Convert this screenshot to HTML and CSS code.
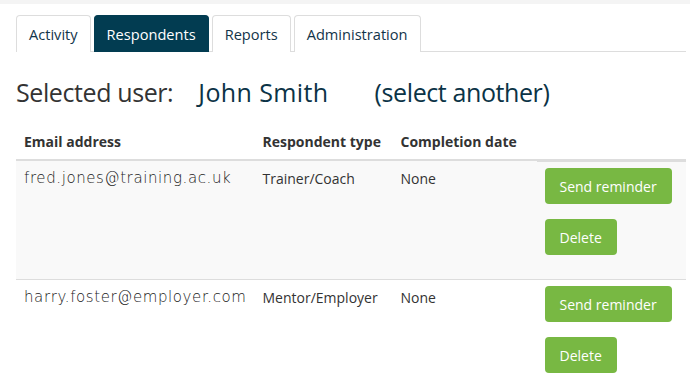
FILE: index.html
```html
<!DOCTYPE html>
<html>
<head>
<meta charset="utf-8">
<link rel="stylesheet" href="styles.css">
</head>
<body>
<div class="topstrip"></div>
<div class="page">
  <ul class="tabs">
    <li class="tab">Activity</li>
    <li class="tab active">Respondents</li>
    <li class="tab">Reports</li>
    <li class="tab">Administration</li>
  </ul>
  <h1 class="title"><span class="label">Selected user:</span><span class="user">John Smith</span><span class="other">(select another)</span></h1>
  <table class="resp">
    <thead>
      <tr><th class="c-email">Email address</th><th class="c-type">Respondent type</th><th class="c-date">Completion date</th><th class="c-act"></th></tr>
    </thead>
    <tbody>
      <tr class="odd">
        <td class="email">fred.jones@training.ac.uk</td>
        <td>Trainer/Coach</td>
        <td>None</td>
        <td class="acts"><button class="btn">Send reminder</button><button class="btn">Delete</button></td>
      </tr>
      <tr>
        <td class="email">harry.foster@employer.com</td>
        <td>Mentor/Employer</td>
        <td>None</td>
        <td class="acts"><button class="btn">Send reminder</button><button class="btn">Delete</button></td>
      </tr>
    </tbody>
  </table>
</div>
</body>
</html>
```
FILE: styles.css
```css
* { box-sizing: border-box; }
html, body { margin: 0; padding: 0; background: #fff; }
body { font-family: "Open Sans", sans-serif; font-size: 14px; color: #333; }
.topstrip { height: 4px; background: #f4f4f4; }
.page { padding: 11px 4px 0 16px; }
.tabs {
  list-style: none; margin: 0; padding: 0;
  display: flex; gap: 3px;
  border-bottom: 1px solid #ddd;
}
.tab {
  height: 37px; line-height: 36px; padding: 0 12px;
  border: 1px solid #ddd; border-bottom: none;
  border-radius: 4px 4px 0 0; font-size: 14.6px;
  color: #12344a; margin-bottom: -1px; background: #fff;
}
.tab.active { background: #023c51; border-color: #023c51; color: #fff; }
.title {
  font-weight: 400; font-size: 25px; margin: 23px 0 0 0; line-height: 34px;
  display: flex; color: #333; letter-spacing: -0.4px;
}
.title .user { color: #0b3346; margin-left: 25px; letter-spacing: 0.4px; }
.title .other { color: #0b3346; margin-left: 46px; }
.resp { border-collapse: collapse; width: 670px; margin-top: 15px; }
.resp th {
  text-align: left; font-weight: 700; padding: 8px 8px; height: 34px;
  border-bottom: 2px solid #ddd; vertical-align: bottom;
}
.resp td { padding: 8px; vertical-align: top; border-top: 1px solid #ddd; }
.resp tr.odd td { background: #f9f9f9; }
.c-email { width: 238px; }
.c-type { width: 138px; }
.c-date { width: 144px; }
.email { font-family: "DejaVu Sans", sans-serif; font-weight: 200; font-size: 15px; letter-spacing: 0.6px; color: #222; }
.acts { display: flex; flex-direction: column; align-items: flex-start; gap: 15px; padding-top: 6px !important; padding-bottom: 24px !important; }
.btn {
  font-family: "Open Sans", sans-serif; font-size: 14px; color: #fff;
  background: #78b843; border: none; border-radius: 4px;
  height: 36px; padding: 0 15px; cursor: pointer;
}
```
